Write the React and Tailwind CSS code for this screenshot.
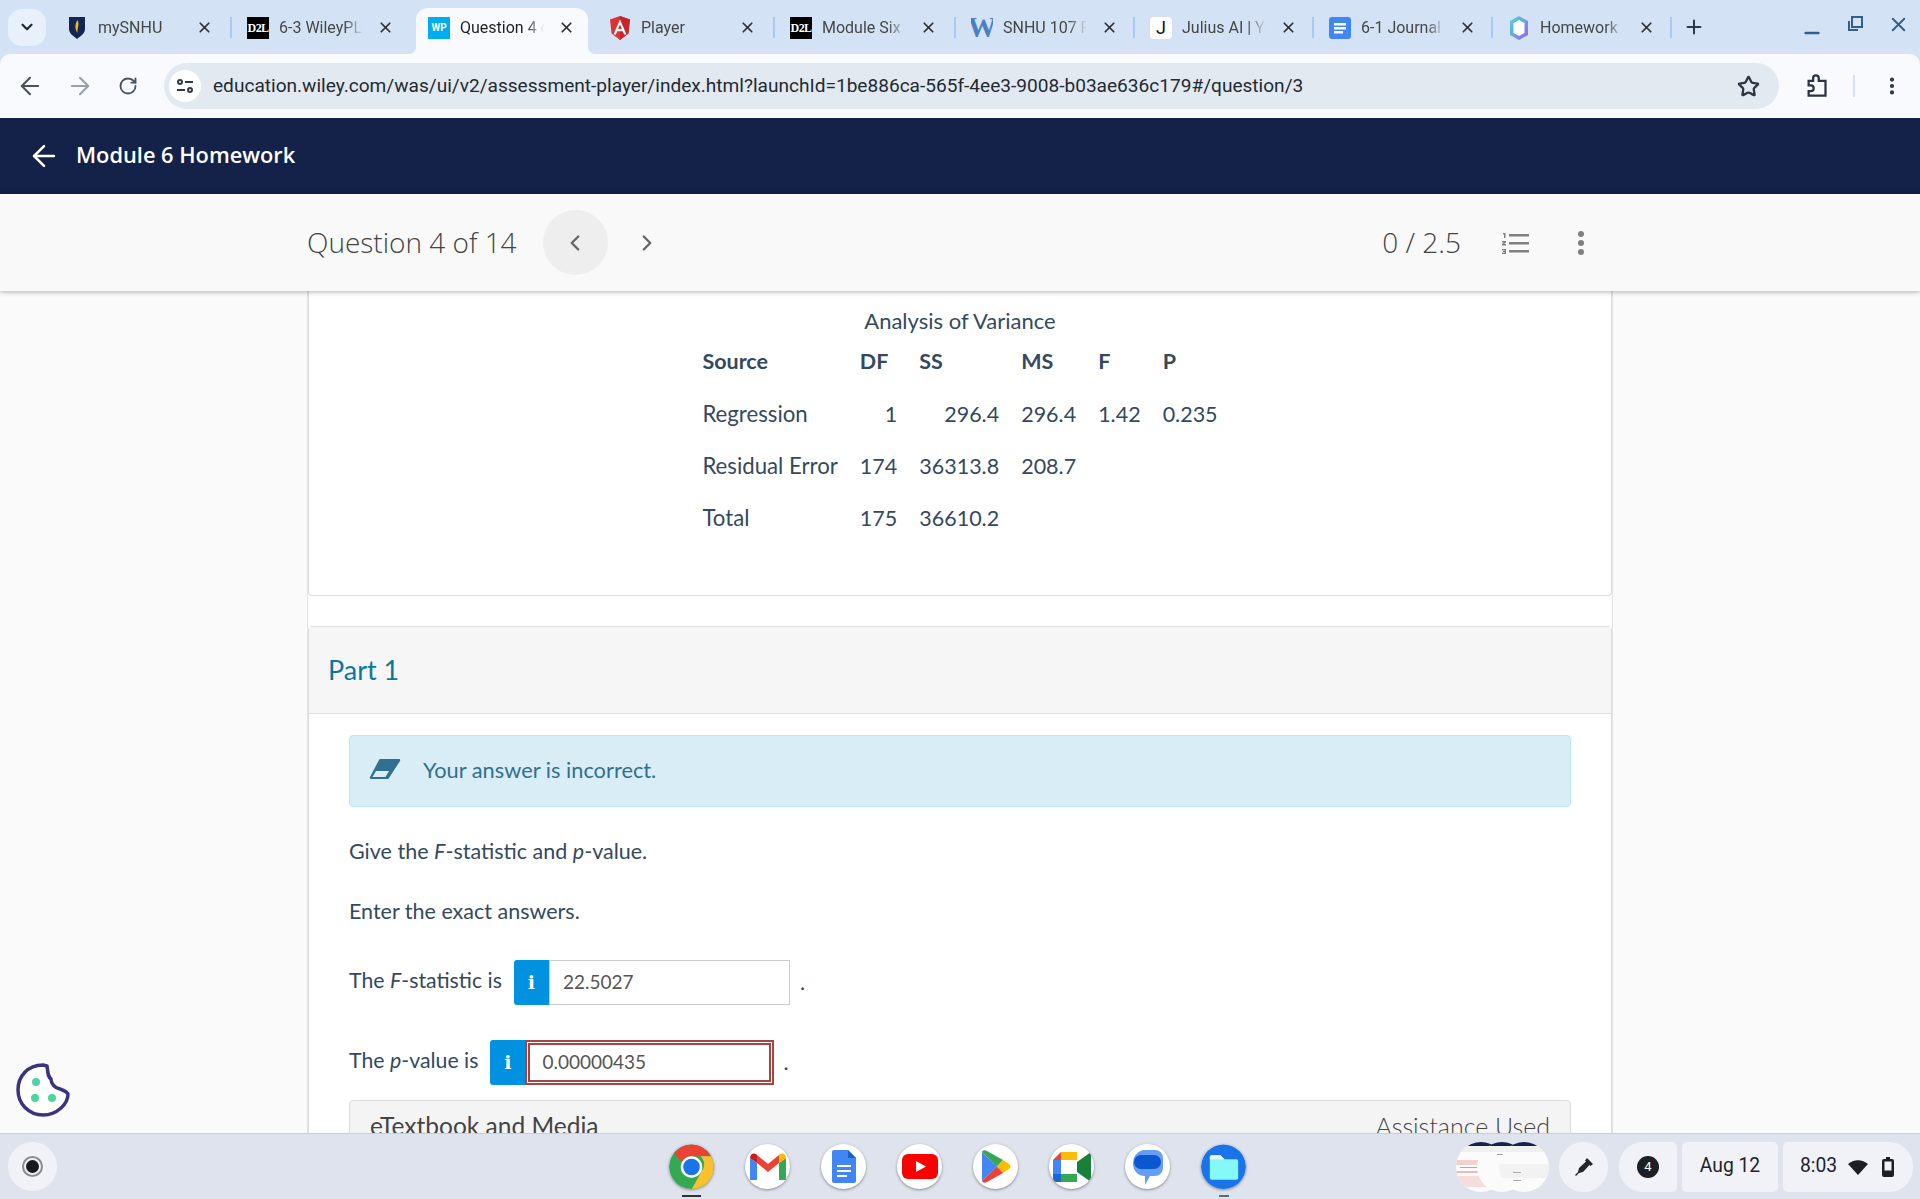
import { ArrowLeft, ArrowRight, ChevronDown, ChevronLeft, ChevronRight, EllipsisVertical, Minus, Plus, RotateCw, Star, X } from "lucide-react"

const D2L = () => (
    <span className="flex w-[22px] h-[22px] items-center justify-center bg-black text-white text-[12px] font-bold font-['Liberation_Serif',serif] tracking-tighter">D2L</span>
)

const tabs = [
    {
        title: "mySNHU",
        icon: (
            <svg width="22" height="24" viewBox="0 0 22 24">
                <path d="M3 1h16v12c0 4-4 7-8 10-4-3-8-6-8-10z" fill="#14264f" />
                <path d="M11.500 4c2.500 5-.5 7 0 13-2.500-4-3-8 0-13z" fill="#f5b81c" />
            </svg>
        ),
    },
    { title: "6-3 WileyPLUS", icon: <D2L /> },
    {
        title: "Question 4 of 14",
        active: true,
        icon: <span className="flex w-[22px] h-[22px] items-center justify-center bg-[#00aeef] text-white text-[10px] font-bold font-['Roboto',sans-serif]">WP</span>,
    },
    {
        title: "Player",
        icon: (
            <svg width="22" height="24" viewBox="0 0 22 24">
                <path d="M11 0l10 3.500-1.600 14L11 24l-8.400-6.500L1 3.500z" fill="#dd3333" />
                <path d="M11 0l10 3.500-1.600 14L11 24z" fill="#c3272b" />
                <path d="M11 3.500L4.500 18.500h2.400l1.300-3.300h5.600l1.300 3.300h2.400zM9.100 13L11 8.400 12.900 13z" fill="#fff" />
            </svg>
        ),
    },
    { title: "Module Six", icon: <D2L /> },
    {
        title: "SNHU 107 Project",
        icon: <span className="flex w-[22px] h-[22px] items-center justify-center text-[#4a7fc4] text-[29px] font-bold font-['Liberation_Serif',serif]">W</span>,
    },
    {
        title: "Julius AI | Your",
        icon: <span className="flex w-[22px] h-[22px] items-center justify-center bg-white rounded text-[#111] text-[18px] font-['Roboto',sans-serif]">J</span>,
    },
    {
        title: "6-1 Journal",
        icon: (
            <svg width="22" height="22" viewBox="0 0 22 22">
                <rect width="22" height="22" rx="3" fill="#4285f4" />
                <path d="M5 6h12v2.500H5zM5 10h12v2.500H5zM5 14h9v2.500H5z" fill="#fff" />
            </svg>
        ),
    },
    {
        title: "Homework",
        icon: (
            <svg width="20" height="24" viewBox="0 0 20 24">
                <defs>
                    <linearGradient id="gem" x1="0" y1="0" x2="1" y2="1">
                        <stop offset="0" stopColor="#3fe0d0" />
                        <stop offset="1" stopColor="#a45cf0" />
                    </linearGradient>
                </defs>
                <path d="M10 0l9 5v14l-9 5-9-5V5z" fill="url(#gem)" />
                <path d="M10 4l5.500 3v10L10 20l-5.500-3V7z" fill="#fff" />
            </svg>
        ),
    },
]

function Tab({ tab, index }) {
    const showSep = index > 0 && !tab.active && !tabs[index - 1].active
    return (
        <div className={`relative flex items-center h-full shrink-0 ${index < 5 ? "w-[181px]" : "w-[179px]"}`}>
            {showSep && <div className="absolute left-0 top-[17px] h-[21px] w-[2px] bg-[#a8c7fa]"></div>}
            {tab.active && (
                <>
                    <div className="absolute left-[5px] right-[4px] top-[8px] bottom-0 bg-[#f8fafd] rounded-t-[12px]"></div>
                    <div className="absolute left-[-3px] bottom-0 w-[8px] h-[8px] bg-[radial-gradient(circle_at_0_0,#d3e3f5_8px,#f8fafd_8.5px)]"></div>
                    <div className="absolute right-[-4px] bottom-0 w-[8px] h-[8px] bg-[radial-gradient(circle_at_100%_0,#d3e3f5_8px,#f8fafd_8.5px)]"></div>
                </>
            )}
            <div className="relative flex items-center pl-[17px] pt-[1px] w-full">
                <div className="flex items-center justify-center w-[22px] h-[24px] shrink-0 overflow-hidden">{tab.icon}</div>
                <div className={`ml-[10px] w-[84px] whitespace-nowrap overflow-hidden text-[16px] [mask-image:linear-gradient(to_right,black_78%,transparent)] ${tab.active ? "text-[#1f1f1f]" : "text-[#444746]"}`}>
                    {tab.title}
                </div>
                <X size={17} strokeWidth={2.4} className="ml-[14px] text-[#2b2f33]" />
            </div>
        </div>
    )
}

function TabStrip() {
    return (
        <div className="flex items-center h-[54px] bg-[#d3e3f5] font-['Roboto',sans-serif] shrink-0">
            <div className="flex items-center justify-center w-[38px] h-[37px] ml-[8px] mr-[3px] rounded-[14px] bg-[#e8f0fb]">
                <ChevronDown size={18} strokeWidth={3} className="text-[#1f2a37]" />
            </div>
            {tabs.map((tab, i) => (
                <Tab key={tab.title} tab={tab} index={i} />
            ))}
            <div className="w-[2px] h-[21px] bg-[#a8c7fa] mt-[1px]"></div>
            <Plus size={22} strokeWidth={2.2} className="ml-[11px] text-[#2b3a4a]" />
            <div className="ml-auto flex items-center pr-[10px] text-[#2f5f8a]">
                <Minus size={22} strokeWidth={2.6} className="mt-[12px]" />
                <svg width="18" height="18" viewBox="0 0 18 18" className="ml-[23px] -mt-[7px]" fill="none" stroke="currentColor" strokeWidth="2">
                    <rect x="6" y="2" width="10" height="10" />
                    <path d="M3 6v9h9" />
                </svg>
                <X size={23} strokeWidth={2} className="ml-[23px] -mt-[6px]" />
            </div>
        </div>
    )
}

function Toolbar() {
    return (
        <div className="flex items-center h-[64px] bg-[#f8fafd] rounded-t-[10px] font-['Roboto',sans-serif] shrink-0">
            <ArrowLeft size={28} strokeWidth={1.8} className="ml-[16px] text-[#47525e]" />
            <ArrowRight size={28} strokeWidth={1.8} className="ml-[22px] text-[#98a1ab]" />
            <RotateCw size={20} strokeWidth={2.2} className="ml-[24px] text-[#47525e]" />
            <div className="flex items-center ml-[26px] w-[1615px] h-[46px] rounded-full bg-[#e2e9f1]">
                <div className="flex items-center justify-center ml-[5px] w-[32px] h-[32px] rounded-full bg-white">
                    <svg width="18" height="16" viewBox="0 0 18 16" fill="none" stroke="#303a44" strokeWidth="2">
                        <circle cx="4" cy="4" r="2" />
                        <path d="M9 4h8M1 12h8" />
                        <circle cx="14" cy="12" r="2" />
                    </svg>
                </div>
                <span className="ml-[12px] pt-[1px] text-[19.080px] text-[#1f2a33] whitespace-nowrap">education.wiley.com/was/ui/v2/assessment-player/index.html?launchId=1be886ca-565f-4ee3-9008-b03ae636c179#/question/3</span>
                <Star size={23} strokeWidth={2.4} className="ml-auto mr-[19px] text-[#2b3440]" />
            </div>
            <svg width="27" height="27" viewBox="0 0 24 24" className="ml-[24px]" fill="none" stroke="#2b3440" strokeWidth="2">
                <path d="M5 7h4V4.500a2 2 0 0 1 5 0V7h6v13H5v-4h2a2.500 2.500 0 0 0 0-5H5z" />
            </svg>
            <div className="ml-[23px] w-[2px] h-[22px] bg-[#d3e3f5]"></div>
            <EllipsisVertical size={22} strokeWidth={2.6} className="ml-[26px] text-[#2b3440]" />
        </div>
    )
}

function SubHeader() {
    return (
        <div className="relative z-10 flex justify-center h-[97px] bg-[#f9f9f9] shadow-[0_1px_5px_rgba(0,0,0,0.3)] font-['Open_Sans',sans-serif] shrink-0">
            <div className="flex items-center w-[1306px] text-[#444444]">
                <span className="pb-[2px] text-[28px] font-light">Question 4 of 14</span>
                <div className="flex items-center justify-center w-[65px] h-[65px] ml-[26px] rounded-full bg-[#eeeeee]">
                    <ChevronLeft size={26} strokeWidth={2.2} className="text-[#666]" />
                </div>
                <ChevronRight size={26} strokeWidth={2.2} className="ml-[26px] text-[#666]" />
                <span className="ml-auto pb-[2px] text-[28px] font-light">0 / 2.5</span>
                <svg width="27" height="22" viewBox="0 0 27 22" className="ml-[41px]">
                    <path d="M7 2h20v2.500H7zM7 10h20v2.500H7zM7 18h20v2.500H7z" fill="#808080" />
                    <path d="M1 1h2.500v5H2V2.500H1zM0 9h4v1.500L2 12h2v1.500H0V12l2-1.500H0zM0 17h4v5H0v-1.300h2.500v-.6H1v-1.200h1.500v-.6H0z" fill="#808080" />
                </svg>
                <div className="ml-[49px] mr-[29px] flex flex-col gap-[3px]">
                    <span className="w-[6px] h-[6px] rounded-full bg-[#808080]"></span>
                    <span className="w-[6px] h-[6px] rounded-full bg-[#808080]"></span>
                    <span className="w-[6px] h-[6px] rounded-full bg-[#808080]"></span>
                </div>
            </div>
        </div>
    )
}

const rows = [
    ["Regression", "1", "296.4", "296.4", "1.42", "0.235"],
    ["Residual Error", "174", "36313.8", "208.7", "", ""],
    ["Total", "175", "36610.2", "", "", ""],
]

function AnovaTable() {
    return (
        <div className="h-[305px] pt-[16px] border border-t-0 border-[#dddddd] rounded-b-[4px] bg-white">
            <p className="text-center text-[22px] leading-[28px]">Analysis of Variance</p>
            <table className="mx-auto border-collapse">
                <thead>
                    <tr className="h-[53px] font-bold text-left">
                        <th className="pr-[22px]">Source</th>
                        <th className="pr-[22px]">DF</th>
                        <th className="pr-[22px]">SS</th>
                        <th className="pr-[22px]">MS</th>
                        <th className="pr-[22px]">F</th>
                        <th>P</th>
                    </tr>
                </thead>
                <tbody>
                    {rows.map((row) => (
                        <tr key={row[0]} className="h-[52px]">
                            {row.map((cell, i) => (
                                <td key={i} className={i === 0 ? "pr-[22px] text-[22.200px]" : i === 5 ? "text-right" : "pr-[22px] text-right"}>
                                    {cell}
                                </td>
                            ))}
                        </tr>
                    ))}
                </tbody>
            </table>
        </div>
    )
}

const InfoButton = () => (
    <div className="flex items-center justify-center w-[35px] h-[45px] bg-[#0091e0] rounded-l-[3px] text-white text-[19px] font-bold font-['DejaVu_Serif',serif]">i</div>
)

function PartOne() {
    return (
        <div className="mt-[30px] border border-[#dddddd] rounded-t-[4px] bg-white">
            <div className="flex items-center h-[87px] pl-[19px] bg-[#f6f6f6] border-b border-[#dddddd]">
                <h2 className="text-[27px] text-[#0a77a3]">Part 1</h2>
            </div>
            <div className="px-[40px] pt-[21px]">
                <div className="flex items-center h-[72px] bg-[#d9edf7] border border-[#bce8f1] rounded-[4px] text-[#31708f] text-[21.800px]">
                    <svg width="32" height="22" viewBox="0 0 32 22" className="ml-[19px] mb-[5px]">
                        <path d="M11 1h19c1 0 1.500 1 1 2L20 20c-.5.7-1 1-2 1H2c-1 0-1.500-1-1-2L10 2c.3-.6.6-1 1-1z" fill="#31708f" />
                        <path d="M7 13h13l-3.500 6H3.500z" fill="#d9edf7" />
                    </svg>
                    <span className="ml-[22px] pb-[1px]">Your answer is incorrect.</span>
                </div>
                <p className="mt-[30px] leading-[28px]">
                    Give the <i>F</i>-statistic and <i>p</i>-value.
                </p>
                <p className="mt-[32px] leading-[28px]">Enter the exact answers.</p>
                <div className="flex items-center mt-[35px]">
                    <span className="pb-[4px] text-[21.300px]">The <i>F</i>-statistic is</span>
                    <div className="flex ml-[12px]">
                        <InfoButton />
                        <input readOnly value="22.5027" className="w-[241px] h-[45px] pl-[13px] pb-[3px] border border-[#cccccc] text-[#555555] text-[19px] outline-none" />
                    </div>
                    <span className="ml-[10px]">.</span>
                </div>
                <div className="flex items-center mt-[35px]">
                    <span className="pb-[4px] text-[21.300px]">The <i>p</i>-value is</span>
                    <div className="flex ml-[12px]">
                        <InfoButton />
                        <input readOnly value="0.00000435" className="w-[249px] h-[45px] pl-[15px] pb-[3px] border-2 border-[#a94442] outline-2 -outline-offset-5 outline-[#a94442] text-[#555555] text-[19px]" />
                    </div>
                    <span className="ml-[9px]">.</span>
                </div>
                <div className="flex justify-between mt-[15px] h-[70px] px-[20px] pt-[7px] bg-[#f4f4f4] border border-[#dddddd] rounded-t-[4px] text-[24.500px] text-[#444444]">
                    <span>eTextbook and Media</span>
                    <span className="font-light text-[25px]">Assistance Used</span>
                </div>
            </div>
        </div>
    )
}

function ShelfIcon({ children, bare }) {
    return (
        <div className={`flex items-center justify-center w-[45px] h-[45px] rounded-full overflow-hidden shadow-[0_1px_3px_rgba(0,0,0,0.4)] ${bare ? "" : "bg-white"}`}>
            {children}
        </div>
    )
}

const shelfIcons = [
    <svg key="chrome" width="46" height="46" viewBox="0 0 46 46">
        <circle cx="23" cy="23" r="23" fill="#34a853" />
        <path d="M23 0a23 23 0 0 1 20 12H23a11 11 0 0 0-10 6L5 9A23 23 0 0 1 23 0z" fill="#ea4335" />
        <path d="M43 12a23 23 0 0 1-20 34l10-18a11 11 0 0 0-1-16z" fill="#fbc02d" />
        <circle cx="23" cy="23" r="11" fill="#fff" />
        <circle cx="23" cy="23" r="8.500" fill="#1a73e8" />
    </svg>,
    <svg key="gmail" width="38" height="30" viewBox="0 0 38 30">
        <path d="M1 6v22h7V11z" fill="#4285f4" />
        <path d="M30 11v17h7V6z" fill="#34a853" />
        <path d="M8 11l11 9 11-9V3l-11 9L8 3z" fill="#ea4335" />
        <path d="M1 6c0-4 4-6 7-3v8z" fill="#c5221f" />
        <path d="M30 3c3-3 7-1 7 3l-7 5z" fill="#fbbc04" />
    </svg>,
    <svg key="docs" width="24" height="33" viewBox="0 0 24 33">
        <path d="M2 0h14l8 8v23a2 2 0 0 1-2 2H2a2 2 0 0 1-2-2V2a2 2 0 0 1 2-2z" fill="#4285f4" />
        <path d="M16 0l8 8h-8z" fill="#1f5fc9" />
        <path d="M5 15h14v2H5zM5 20h14v2H5zM5 25h10v2H5z" fill="#fff" />
    </svg>,
    <svg key="youtube" width="36" height="25" viewBox="0 0 36 25">
        <rect width="36" height="25" rx="6" fill="#ff0000" />
        <path d="M14 7l10 5.500L14 18z" fill="#fff" />
    </svg>,
    <svg key="play" width="30" height="33" viewBox="0 0 30 33">
        <path d="M1 2v29l15-14.500z" fill="#4285f4" />
        <path d="M1 2c1-2 3-2 5-1l16 9-6 6.500z" fill="#34a853" />
        <path d="M22 10l6 4c2 1.500 2 3.500 0 5l-6 4-6-6.500z" fill="#fbbc04" />
        <path d="M1 31c1 2 3 2 5 1l16-9-6-6.500z" fill="#ea4335" />
    </svg>,
    <svg key="meet" width="38" height="30" viewBox="0 0 38 30">
        <path d="M8 0h16v8H8z" fill="#fbbc04" />
        <path d="M8 0v8H0z" fill="#ea4335" />
        <path d="M0 8h8v14H0z" fill="#4285f4" />
        <path d="M0 22h8v8H3a3 3 0 0 1-3-3z" fill="#1967d2" />
        <path d="M8 22h16v8H8z" fill="#34a853" />
        <path d="M24 10l14-10v30L24 20z" fill="#188038" />
        <path d="M24 0h-2v8h2z" fill="#fbbc04" />
    </svg>,
    <svg key="messages" width="30" height="36" viewBox="0 0 30 36">
        <path d="M10 1h12a8 8 0 0 1 8 8v10a8 8 0 0 1-8 8h-5l-5 9v-9a12 12 0 0 1-12-13A13 13 0 0 1 10 1z" fill="#669df6" />
        <rect x="1" y="6" width="27" height="14" rx="7" fill="#0b57d0" />
    </svg>,
    <svg key="files" width="46" height="46" viewBox="0 0 46 46">
        <circle cx="23" cy="23" r="23" fill="#1a73e8" />
        <path d="M9 13a2 2 0 0 1 2-2h9l4 4h12a2 2 0 0 1 2 2v17a2 2 0 0 1-2 2H11a2 2 0 0 1-2-2z" fill="#84f9f8" />
        <path d="M9 13a2 2 0 0 1 2-2h9l4 4H9z" fill="#e8fdfd" />
    </svg>,
]

// thumbnails of the open windows in the shelf pod
const Pod = ({ id, className, children }) => (
    <svg width="50" height="50" viewBox="0 0 50 50" className={className}>
        <clipPath id={id}>
            <circle cx="25" cy="25" r="25" />
        </clipPath>
        <g clipPath={`url(#${id})`}>
            <rect width="50" height="50" fill="#fbfbfb" />
            <rect width="50" height="4" fill="#14224a" />
            <rect y="4" width="50" height="6" fill="#f0f0f0" />
            {children}
        </g>
    </svg>
)

function Pods() {
    return (
        <div className="flex items-center ml-[210px] h-[50px] w-[93px]">
            <Pod id="pod-a">
                <rect y="18" width="50" height="5" fill="#f3d0d0" />
                <rect x="4" y="25" width="30" height="1" fill="#c9a0a0" />
                <rect y="29" width="50" height="2" fill="#efb9b9" />
                <rect y="34" width="50" height="11" fill="#f7dcdc" />
            </Pod>
            <Pod id="pod-b" className="-ml-[29px]">
                <rect x="20" y="12" width="8" height="1" fill="#999" />
                <rect x="26" y="16" width="6" height="1" fill="#aaa" />
                <rect x="26" y="20" width="10" height="1" fill="#aaa" />
                <rect x="26" y="24" width="8" height="1" fill="#aaa" />
            </Pod>
            <Pod id="pod-c" className="-ml-[28px]">
                <rect y="22" width="50" height="14" fill="#f2f2f2" />
                <rect x="14" y="30" width="8" height="1" fill="#aaa" />
                <rect x="14" y="38" width="8" height="1" fill="#aaa" />
            </Pod>
        </div>
    )
}

function Shelf() {
    return (
        <div className="relative z-20 flex items-center h-[66px] bg-[#dee3ed] border-t border-[#c9ced8] font-['Roboto',sans-serif] text-[#1f2328] shrink-0">
            <div className="flex items-center justify-center w-[49px] h-[49px] ml-[8px] rounded-full bg-[#f0f2f8]">
                <div className="flex items-center justify-center w-[21px] h-[21px] rounded-full border-2 border-[#8a8a8a] bg-[#f0f2f8]">
                    <div className="w-[13px] h-[13px] rounded-full bg-[#171a21]"></div>
                </div>
            </div>
            <div className="flex items-center gap-[31px] ml-[612px]">
                {shelfIcons.map((icon, i) => (
                    <div key={icon.key} className="relative">
                        <ShelfIcon bare={i === 0 || i === 7}>{icon}</ShelfIcon>
                        {i === 0 && <div className="absolute left-[13px] top-[51px] w-[19px] h-[2px] bg-[#333]"></div>}
                        {i === 7 && <div className="absolute left-[18px] top-[51px] w-[10px] h-[2px] bg-[#666]"></div>}
                    </div>
                ))}
            </div>
            <Pods />
            <div className="flex items-center justify-center w-[49px] h-[50px] ml-[10px] rounded-full bg-[#f0f2f8]">
                <svg width="20" height="20" viewBox="0 0 20 20" fill="#23272c">
                    <path d="M13 1l6 6-2.500 2-1-1-6.500 7-4 1-3 3-1-1 3-3 1-4 7-6.500-1-1z" />
                </svg>
            </div>
            <div className="flex items-center justify-center w-[58px] h-[50px] ml-[11px] rounded-l-[24px] rounded-r-[5px] bg-[#f0f2f8]">
                <span className="flex items-center justify-center w-[22px] h-[22px] rounded-full bg-[#1c1f24] text-white text-[13px]">4</span>
            </div>
            <div className="flex items-center justify-center w-[96px] h-[50px] ml-[5px] rounded-[5px] bg-[#f0f2f8] text-[19.300px]">Aug 12</div>
            <div className="flex items-center w-[130px] h-[50px] ml-[5px] pl-[17px] rounded-l-[5px] rounded-r-[24px] bg-[#f0f2f8] text-[19.300px]">
                8:03
                <svg width="22" height="18" viewBox="0 0 22 18" className="ml-[10px]">
                    <path d="M1 6a15 15 0 0 1 20 0L11 17z" fill="#1c1f24" />
                </svg>
                <svg width="12" height="20" viewBox="0 0 12 20" className="ml-[13px]">
                    <path d="M4 0h4v2h2a2 2 0 0 1 2 2v14a2 2 0 0 1-2 2H2a2 2 0 0 1-2-2V4a2 2 0 0 1 2-2h2z" fill="#1c1f24" />
                    <rect x="2.500" y="4.500" width="7" height="9" fill="#f0f2f8" />
                </svg>
            </div>
        </div>
    )
}

export default function App() {
    return (
        <div className="relative flex flex-col h-screen overflow-hidden bg-[#fafafa]">
            <TabStrip />
            <div className="bg-[#d3e3f5] shrink-0">
                <Toolbar />
            </div>

            {/* Module bar */}
            <div className="flex items-center h-[76px] bg-[#14224a] text-white font-['Open_Sans',sans-serif] shrink-0">
                <ArrowLeft size={34} strokeWidth={1.8} className="ml-[27px]" />
                <span className="ml-[15px] pb-[2px] text-[21.800px] font-semibold">Module 6 Homework</span>
            </div>

            <SubHeader />

            {/* Question body */}
            <main className="flex-1 min-h-0 overflow-hidden">
                <div className="mx-auto w-[1306px] h-full border-x border-[#e3e3e3] bg-white text-[21.500px] text-[#34495e] font-['Lato',sans-serif]">
                    <AnovaTable />
                    <PartOne />
                </div>
            </main>

            <Shelf />

            {/* Cookie preferences button */}
            <svg width="56" height="56" viewBox="0 0 56 56" className="absolute left-[15px] top-[1062px] z-20">
                <path d="M28 3C13 3 3 14 3 28s11 25 25 25 25-11 25-21c-2-3-5-4-8-5-5-1-9-5-9-10-3-2-3-5-4-13z" fill="#fff" stroke="#3a3480" strokeWidth="3.500" strokeLinejoin="round" />
                <circle cx="21" cy="20" r="4" fill="#4cd5a0" />
                <circle cx="20" cy="36" r="4" fill="#4cd5a0" />
                <circle cx="37" cy="36" r="4" fill="#4cd5a0" />
            </svg>
        </div>
    )
}
